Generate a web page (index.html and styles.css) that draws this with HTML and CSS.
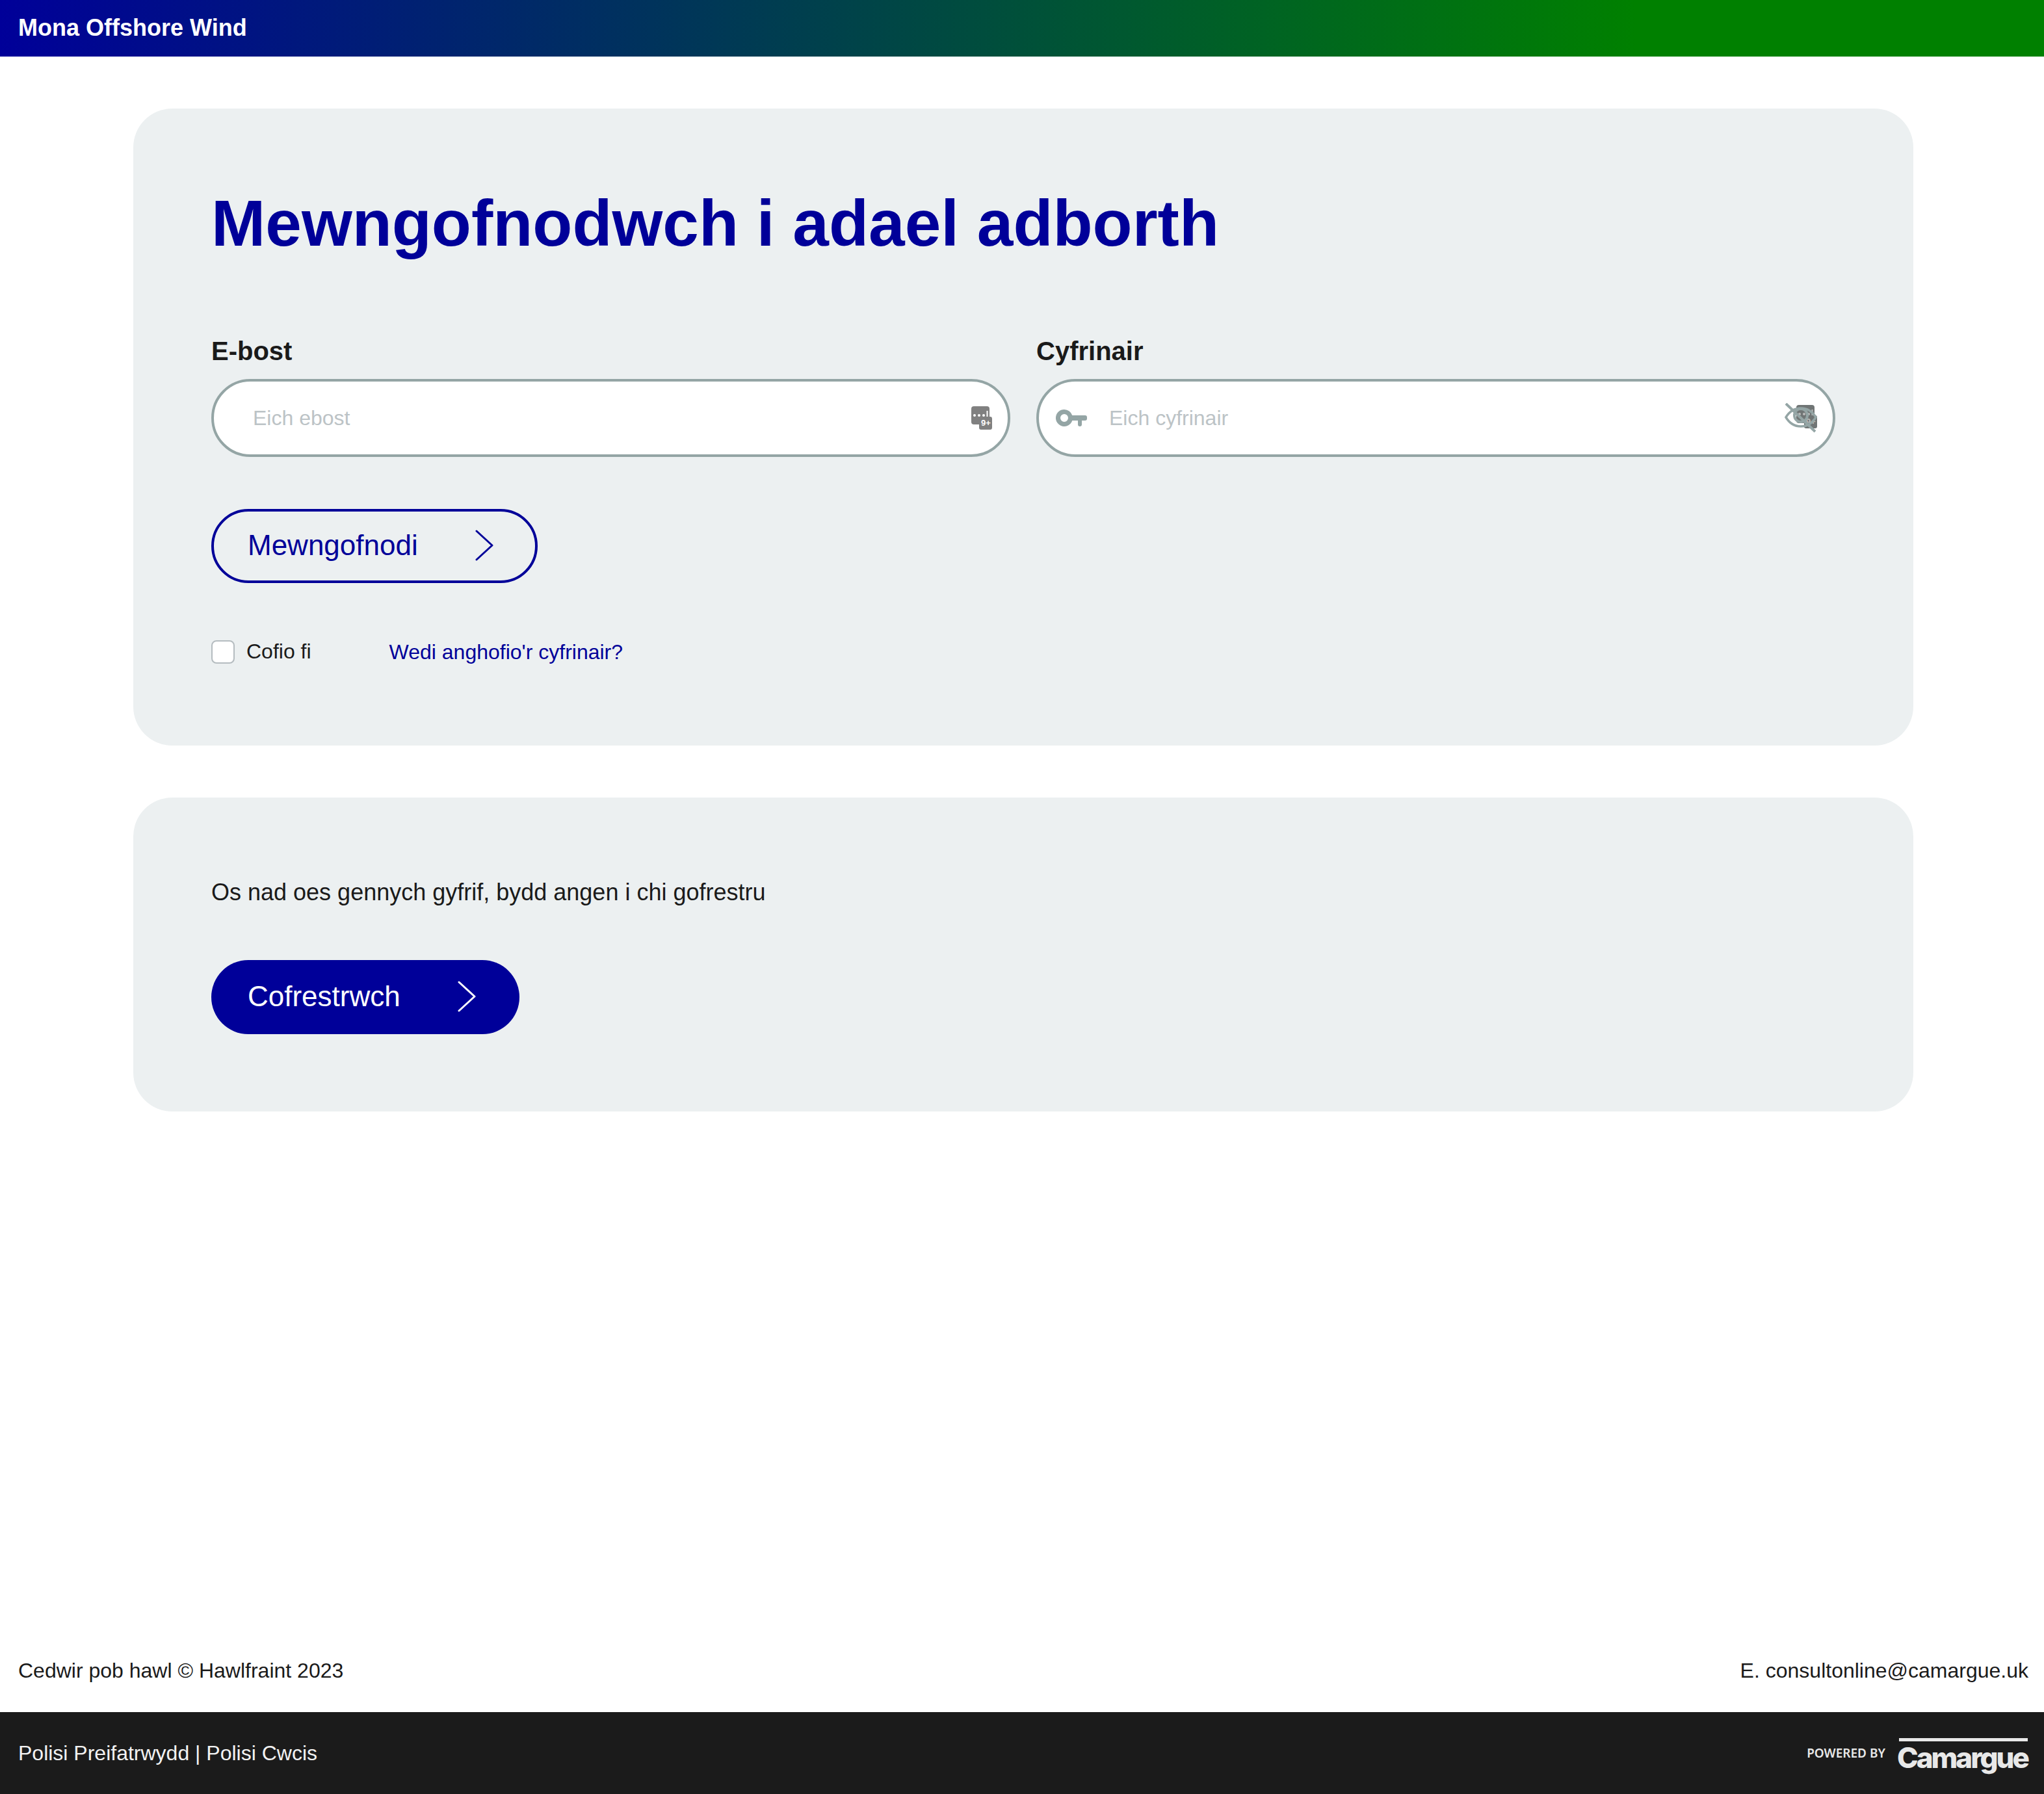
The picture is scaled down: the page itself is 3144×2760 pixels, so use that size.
FILE: index.html
```html
<!DOCTYPE html>
<html lang="cy">
<head>
<meta charset="utf-8">
<title>Mona Offshore Wind</title>
<link rel="stylesheet" href="styles.css">
</head>
<body>
<header class="topbar">Mona Offshore Wind</header>
<main class="main">
  <section class="card card-login">
    <h1 class="title">Mewngofnodwch i adael adborth</h1>
    <div class="fields">
      <div class="field">
        <label class="label">E-bost</label>
        <div class="input">
          <span class="placeholder">Eich ebost</span>
          <span class="badge-wrap">
            <svg class="badge" viewBox="0 0 32 36"><rect x="0" y="0" width="28" height="28" rx="4" fill="#808080"/><rect x="12" y="16" width="20" height="20" rx="3" fill="#808080"/><g fill="#fff"><circle cx="5" cy="14" r="2"/><circle cx="12" cy="14" r="2"/><circle cx="19" cy="14" r="2"/><rect x="23.500" y="7" width="2" height="9"/></g><text x="15" y="30" class="badge-text">9+</text></svg>
          </span>
        </div>
      </div>
      <div class="field">
        <label class="label">Cyfrinair</label>
        <div class="input input-pass">
          <svg class="key" viewBox="0 0 48 26"><path fill="#94a5a5" fill-rule="evenodd" d="M13 0a13 13 0 0 1 12.300 9H45a3 3 0 0 1 3 3v2a3 3 0 0 1-3 3h-5v6a3 3 0 0 1-6 0v-6h-8.700A13 13 0 1 1 13 0zm0 7a6 6 0 1 0 0 12 6 6 0 0 0 0-12z"/></svg>
          <span class="placeholder">Eich cyfrinair</span>
          <svg class="eye" viewBox="0 0 50 46"><rect x="18" y="3" width="28" height="28" rx="4" fill="#707575"/><rect x="30" y="19" width="20" height="20" rx="3" fill="#707575"/><g fill="#bbb"><circle cx="23" cy="17" r="2"/><circle cx="30" cy="17" r="2"/><circle cx="37" cy="17" r="2"/><rect x="41.500" y="10" width="2" height="9"/></g><text x="33" y="33" class="badge-text badge-text-dim">9+</text><path d="M2 22C8 12 16 8 25 8s17 4 23 14c-6 10-14 14-23 14S8 32 2 22z" fill="none" stroke="#94a5a5" stroke-width="3.500"/><circle cx="25" cy="19" r="10" fill="none" stroke="#94a5a5" stroke-width="4"/><path d="M2 1l45 43" stroke="#94a5a5" stroke-width="4"/></svg>
        </div>
      </div>
    </div>
    <a class="btn btn-outline"><span>Mewngofnodi</span><svg class="chev" viewBox="0 0 28 48"><path d="M2 2l24 22L2 46" fill="none" stroke="currentColor" stroke-width="3" stroke-linecap="round" stroke-linejoin="round"/></svg></a>
    <div class="remember">
      <span class="check-wrap"><span class="checkbox"></span><span class="remember-text">Cofio fi</span></span>
      <a class="forgot">Wedi anghofio'r cyfrinair?</a>
    </div>
  </section>
  <section class="card card-register">
    <p class="intro">Os nad oes gennych gyfrif, bydd angen i chi gofrestru</p>
    <a class="btn btn-solid"><span>Cofrestrwch</span><svg class="chev" viewBox="0 0 28 48"><path d="M2 2l24 22L2 46" fill="none" stroke="currentColor" stroke-width="3" stroke-linecap="round" stroke-linejoin="round"/></svg></a>
  </section>
</main>
<div class="subfooter">
  <span>Cedwir pob hawl © Hawlfraint 2023</span>
  <span>E. consultonline@camargue.uk</span>
</div>
<footer class="footer">
  <span>Polisi Preifatrwydd | Polisi Cwcis</span>
  <span class="powered">
    <span class="powered-by">POWERED BY</span>
    <span class="logo"><span class="logo-bar"></span><span class="logo-text">Camargue</span></span>
  </span>
</footer>
</body>
</html>
```
FILE: styles.css
```css
* { box-sizing: border-box; }
html, body { margin: 0; padding: 0; }
body {
  height: 2760px;
  display: flex;
  flex-direction: column;
  font-family: "Liberation Sans", Arial, sans-serif;
  color: #1a1a1a;
  background: #fff;
}
.topbar {
  height: 87px;
  flex: none;
  display: flex;
  align-items: center;
  padding: 0 0 2px 28px;
  font-size: 36px;
  font-weight: 700;
  color: #fff;
  background: linear-gradient(90deg, #000099 0%, #008000 80%);
}
.main {
  flex: 1;
  padding: 80px 201px 0 205px;
  display: flex;
  flex-direction: column;
  gap: 80px;
}
.card {
  background: #ecf0f1;
  border-radius: 60px;
  padding: 0 120px;
}
.card-login { height: 980px; padding-top: 116px; }
.card-register { height: 483px; padding-top: 124px; }
.title {
  margin: 0;
  font-size: 100px;
  line-height: 120px;
  font-weight: 700;
  color: #000099;
}
.fields {
  display: grid;
  grid-template-columns: 1fr 1fr;
  gap: 40px;
  margin-top: 114px;
}
.label {
  display: block;
  font-size: 40px;
  font-weight: 700;
  line-height: 46px;
  margin-bottom: 20px;
}
.input {
  height: 120px;
  border: 4px solid #94a5a5;
  border-radius: 60px;
  background: #fff;
  display: flex;
  align-items: center;
  padding: 0 24px 0 60px;
}
.input-pass { padding-left: 26px; }
.placeholder { font-size: 32px; color: #bcc3c6; flex: 1; }
.key { width: 48px; height: 26px; margin-right: 34px; }
.badge-wrap { display: flex; }
.badge { width: 32px; height: 36px; }
.badge-text { font: 700 13px "Liberation Sans", sans-serif; fill: #fff; }
.badge-text-dim { fill: #bbb; }
.eye { width: 50px; height: 46px; margin-right: 0; }
.btn {
  display: inline-flex;
  align-items: center;
  height: 114px;
  border-radius: 57px;
  font-size: 44px;
  padding: 0 67px 2px 56px;
  gap: 88px;
}
.btn-outline {
  border: 4px solid #000099;
  color: #000099;
  margin-top: 80px;
  padding-left: 52px;
  padding-right: 64px;
}
.btn-solid { background: #000099; color: #fff; margin-top: 82px; }
.chev { width: 28px; height: 48px; }
.remember {
  display: flex;
  align-items: center;
  margin-top: 86px;
}
.check-wrap { display: flex; align-items: center; }
.checkbox {
  width: 36px;
  height: 36px;
  border: 2px solid #b5bcc0;
  border-radius: 8px;
  background: #fff;
  margin-right: 18px;
}
.remember-text { font-size: 32px; }
.forgot { font-size: 32px; color: #000099; margin: 2px 0 0 120px; }
.intro { margin: 0; font-size: 36px; line-height: 44px; }
.subfooter {
  flex: none;
  display: flex;
  justify-content: space-between;
  padding: 0 24px 44px 28px;
  font-size: 32px;
  line-height: 40px;
}
.footer {
  flex: none;
  height: 126px;
  background: #1b1b1b;
  color: #f2f2f2;
  display: flex;
  align-items: center;
  justify-content: space-between;
  padding: 0 25px 0 28px;
  font-size: 32px;
}
.powered { display: flex; align-items: center; gap: 18px; }
.powered-by { font: 600 19px "Noto Sans", sans-serif; color: #e8e8e8; }
.logo { display: flex; flex-direction: column; align-items: flex-end; margin-top: 8px; }
.logo-bar { width: 198px; height: 5px; background: #e8e8e8; }
.logo-text { font: 800 44px/50px Inter, sans-serif; letter-spacing: -3px; color: #e8e8e8; }
```
